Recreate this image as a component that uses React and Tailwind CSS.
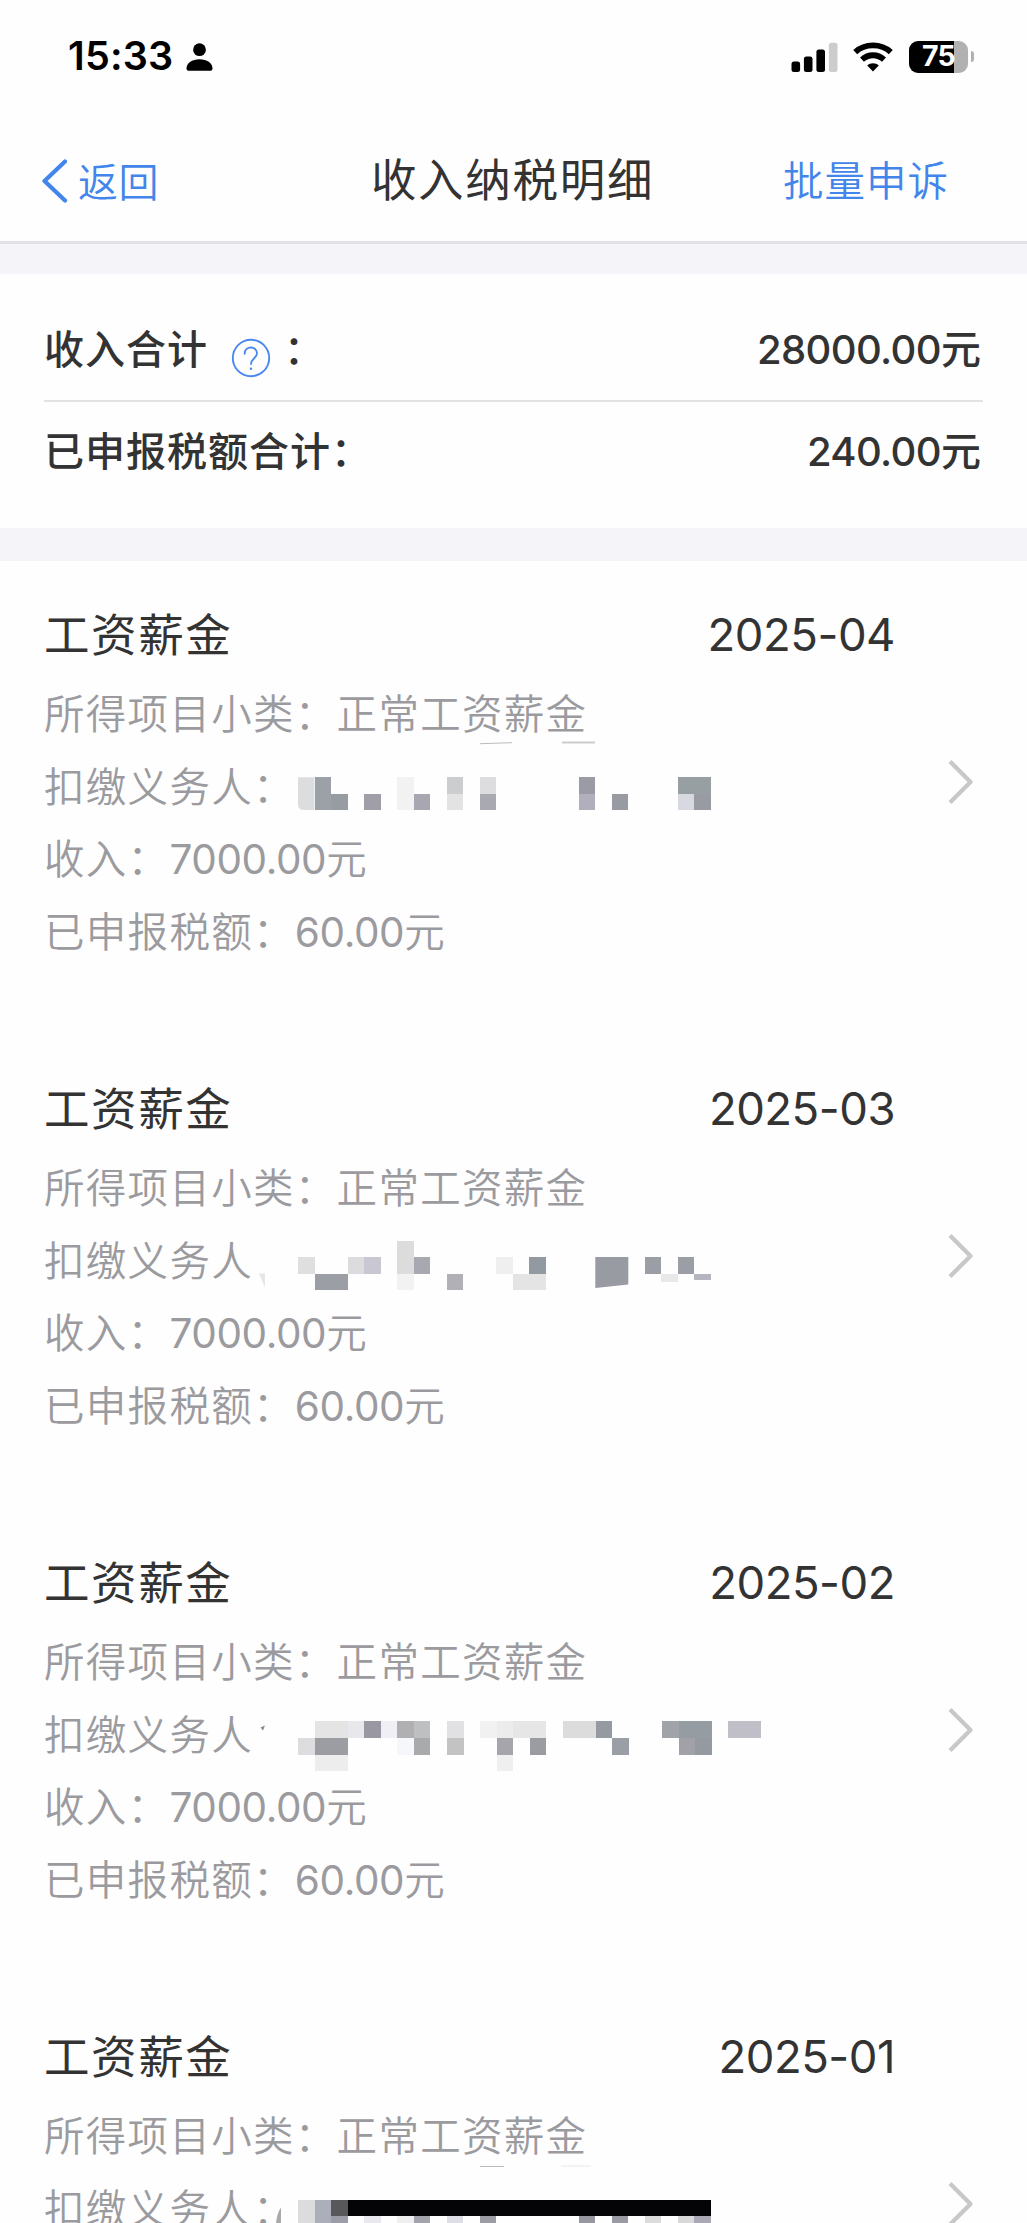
// Masked payer names: [column, y, columns wide, height, colour]
const MASKS = {
  "2025-04": {
    cell: 16.5, x: 298,
    cells: [
      [1, 27.2, 1, 33, "#9ca1a8"], [2, 43.7, 1, 16.3, "#979ca2"], [4, 43.7, 1, 16.3, "#a09fa8"],
      [6, 27.2, 1, 33, "#f2f2f2"], [7, 43.7, 1, 16.3, "#a8a7b1"], [9, 27.2, 1, 16.5, "#cccdce"],
      [9, 43.7, 1, 16.3, "#e3e3e3"], [11, 27.2, 1, 16.5, "#dddddf"], [11, 43.7, 1, 16.3, "#a9a9b1"],
      [17, 27.2, 1, 16.5, "#9b9ba5"], [17, 43.7, 1, 16.3, "#b0afbb"], [19, 43.7, 1, 16.3, "#989ca2"],
      [23, 27.2, 2, 16.5, "#989fa3"], [23, 43.7, 1, 16.3, "#d8d8e1"], [24, 43.7, 1, 16.3, "#989ca2"],
    ],
    extra: (
      <>
        <path d="M298 27.200H314.500V60H304Q298 60 298 54z" fill="#dcdddf" />
        <path d="M480 -6.300l32-1" stroke="#bbbbbb" strokeWidth="1" />
        <path d="M562 -7.500h33" stroke="#cccccc" strokeWidth="2" />
      </>
    ),
  },
  "2025-03": {
    cell: 16.5, x: 298,
    cells: [
      [0, 33, 1, 16.5, "#dfdfdf"], [1, 49.5, 2, 16.5, "#9b9ea4"], [3, 33, 1, 16.5, "#dcdcde"],
      [4, 33, 1, 16.5, "#c8c7d2"], [6, 16.5, 1, 33, "#dcdcdd"], [6, 49.5, 1, 16.5, "#f2f2f2"],
      [7, 33, 1, 16.5, "#a8a8b1"], [9, 49.5, 1, 16.5, "#b0b0b6"], [12, 33, 1, 16.5, "#efefef"],
      [13, 49.5, 2, 16.5, "#e4e4e5"], [14, 33, 1, 16.5, "#9299a0"], [21, 33, 1, 16.5, "#9b9ea4"],
      [22, 49.5, 1, 8, "#e8e8e8"], [23, 33, 1, 16.5, "#9b9ea4"], [24, 49.5, 1, 6.5, "#b5b5bf"],
    ],
    extra: (
      <>
        <path d="M595.300 33h33v27.500l-33 3.500z" fill="#989ba2" />
        <path d="M259 49.500h6v14z" fill="#e6e6e6" />
      </>
    ),
  },
  "2025-02": {
    cell: 16.55, x: 298,
    cells: [
      [0, 40, 1, 17, "#dddddf"], [1, 23, 2, 17, "#e4e4e4"], [1, 40, 2, 17, "#9b9da3"],
      [1, 57, 2, 16, "#ededed"], [3, 23, 1, 17, "#e8e8ec"], [4, 23, 1, 17, "#9998a2"],
      [5, 23, 1, 17, "#efeff5"], [6, 23, 1, 17, "#b0b0b2"], [6, 40, 1, 17, "#f5f7fb"],
      [7, 23, 1, 17, "#bebfc1"], [7, 40, 1, 17, "#a8aaac"], [9, 23, 1, 17, "#e1e1e4"],
      [9, 40, 1, 17, "#c3c3c4"], [11, 23, 1, 17, "#f1f1f1"], [12, 23, 1, 17, "#ececec"],
      [12, 40, 1, 17, "#a5a5ab"], [12, 57, 1, 16, "#efefef"], [13, 23, 2, 17, "#e6e6e7"],
      [14, 40, 1, 17, "#9a9ca2"], [16, 23, 2, 17, "#dcdcdd"], [18, 23, 1, 17, "#9599a0"],
      [19, 40, 1, 17, "#9a9fa5"], [22, 23, 1, 17, "#a0a3a7"], [23, 23, 2, 17, "#959ca2"],
      [23, 40, 1, 17, "#a2a1a8"], [24, 40, 1, 17, "#959aa0"], [26, 23, 2, 17, "#c0bfc8"],
    ],
    extra: <path d="M260.500 29.500l4.500-2-2 5z" fill="#888888" />,
  },
  "2025-01": {
    cell: 16.5, x: 298,
    cells: [
      [0, 28, 1, 24, "#dcdcde"], [1, 28, 1, 24, "#acaeb9"], [2, 28, 1, 16, "#58585a"],
      [2, 44, 1, 8, "#9c9da6"], [3, 28, 22, 16, "#040407"], [4, 44, 1, 8, "#e8e8ee"],
      [6, 44, 1, 8, "#efefef"], [7, 44, 1, 8, "#a3a3ab"], [9, 44, 1, 8, "#dedee6"],
      [11, 44, 1, 8, "#9c9ca4"], [17, 44, 1, 8, "#97979f"], [19, 44, 1, 8, "#9a9aa2"],
      [21, 44, 1, 8, "#dcdcdc"], [23, 44, 1, 8, "#d8d8d8"], [24, 44, 1, 8, "#a9a8b4"],
    ],
    extra: (
      <>
        <path d="M276 51q1-10 5-15.500v15.500z" fill="#aaaaaa" />
        <path d="M480 -5.500h24" stroke="#bbbbbb" strokeWidth="1" />
        <path d="M561 -6h30" stroke="#f3f3f3" strokeWidth="2" />
      </>
    ),
  },
};

const RECORDS = [
  { month: "2025-04", payerLabel: "扣缴义务人：", income: "7000.00", tax: "60.00" },
  { month: "2025-03", payerLabel: "扣缴义务人", income: "7000.00", tax: "60.00" },
  { month: "2025-02", payerLabel: "扣缴义务人", income: "7000.00", tax: "60.00" },
  { month: "2025-01", payerLabel: "扣缴义务人：" },
];

function Mask({ month }) {
  const m = MASKS[month];
  return (
    <svg className="absolute left-0 -top-[2px] overflow-visible" width="760" height="73" viewBox="0 0 760 73">
      <g shapeRendering="crispEdges">
        {m.cells.map(([c, y, w, h, fill], i) => (
          <rect key={i} x={m.x + c * m.cell} y={y} width={w * m.cell} height={h} fill={fill} />
        ))}
      </g>
      {m.extra}
    </svg>
  );
}

function StatusBar() {
  return (
    <div className="flex h-[113px] shrink-0 items-center justify-between pl-[68px] pr-[53px]">
      <div className="flex items-center gap-[13px]">
        <span className="mt-[1px] text-[39.500px] font-semibold tracking-[0.2px] leading-none text-black">15:33</span>
        <svg width="27" height="28" viewBox="0 0 27 28" fill="#000">
          <circle cx="13.500" cy="6.700" r="6.400" />
          <path d="M0.500 25.500C0.500 20 6 16.200 13.500 16.200S26.500 20 26.500 25.500Q26.500 27.800 24.500 27.800H2.500Q0.500 27.800 0.500 25.500z" />
        </svg>
      </div>
      <div className="flex items-center">
        <svg width="47" height="30" viewBox="0 0 47 30">
          <rect x="0.500" y="19.500" width="8.600" height="10.500" rx="2.500" />
          <rect x="12.900" y="14.500" width="8.600" height="15.500" rx="2.500" />
          <rect x="25.400" y="7.500" width="8.600" height="22.500" rx="2.500" />
          <rect x="37.900" y="0.800" width="8.600" height="29.200" rx="2.500" fill="#cccccc" />
        </svg>
        <svg className="ml-[15px]" width="40" height="30" viewBox="0 0 40 30" fill="none" stroke="#000" strokeWidth="5.800">
          <path d="M2.200 10.200C12 1.200 28 1.200 37.800 10.200" />
          <path d="M9 17.600C15.200 11.800 24.800 11.800 31 17.600" />
          <path d="M14.200 23.500C17.300 20.400 22.700 20.400 25.800 23.500L20 29.500z" fill="#000" stroke="none" />
        </svg>
        <div className="ml-4 flex h-8 w-[59px] items-center justify-center overflow-hidden rounded-[9px] bg-[linear-gradient(to_right,#000_45px,#b1b1b1_45px)]">
          <span className="text-[28.500px] font-bold leading-none tracking-[-0.8px] text-white">75</span>
        </div>
        <span className="ml-[3px] h-[11px] w-[3px] rounded-r-full bg-[#b1b1b1]" />
      </div>
    </div>
  );
}

function NavBar() {
  return (
    <div className="flex h-[131px] shrink-0 items-center justify-between border-b-[3px] border-[#e3e2e9] pl-[42px] pr-[78px] pt-[8px]">
      <div className="flex w-[200px] items-center gap-[10px] text-[#4285eb]">
        <svg width="26" height="44" viewBox="0 0 26 44" fill="none" stroke="currentColor" strokeWidth="4.200" strokeLinecap="round" strokeLinejoin="round">
          <path d="M23 2.500L2.500 22L23 41.500" />
        </svg>
        <span className="mt-[3px] text-[40px] font-[350] leading-none tracking-[0.5px]">返回</span>
      </div>
      <h1 className="text-[45.500px] font-normal leading-none tracking-[1.700px] text-[#333]">收入纳税明细</h1>
      <span className="mt-[3px] w-[166px] whitespace-nowrap text-[40.500px] font-[350] leading-none tracking-[1px] text-[#4285eb]">批量申诉</span>
    </div>
  );
}

function Summary() {
  return (
    <section className="flex h-[254px] shrink-0 flex-col px-[44px] pt-[23px] text-[40px] font-medium text-[#333]">
      <div className="flex h-[105px] items-center justify-between border-b-2 border-[#e2e2e2] pr-[2px] pt-[2px]">
        <div className="flex items-center tracking-[1px]">
          <span>收入合计</span>
          <svg className="ml-[23px] mt-[16px]" width="40" height="40" viewBox="0 0 40 40" fill="none" stroke="#4a89f0" strokeWidth="1.900" strokeLinecap="round">
            <circle cx="20" cy="20" r="18.200" />
            <path d="M13.700 15.700C13.700 7.500 26 7.500 26 15.300C26 20 20 20.500 20 26" />
            <circle cx="20" cy="30.700" r="1.200" fill="#4a89f0" stroke="none" />
          </svg>
          <span className="ml-[13px]">：</span>
        </div>
        <span><span className="tracking-[-0.600px]">28000.00</span>元</span>
      </div>
      <div className="flex h-[100px] items-center justify-between pr-[2px]">
        <span className="tracking-[1px]">已申报税额合计：</span>
        <span><span className="tracking-[-0.600px]">240.00</span>元</span>
      </div>
    </section>
  );
}

function Record({ month, payerLabel, income, tax }) {
  return (
    <article className="relative h-[474px] shrink-0 pt-[41px] text-[40.500px] font-[350] tracking-[1.300px] text-[#9b9b9f]">
      <div className="flex h-[66px] items-center justify-between pl-[44px] pr-[132px] text-[45.500px] font-normal text-[#333]">
        <h2 className="mt-[3px] tracking-[1.600px]">工资薪金</h2>
        <span className="mt-[1px] tracking-[-0.5px]">{month}</span>
      </div>
      <div className="flex flex-col pt-[11px] leading-[72.700px]">
        <p className="pl-[44px]">所得项目小类：正常工资薪金</p>
        <div className="relative pl-[44px]">
          {payerLabel}
          <Mask month={month} />
        </div>
        {income && (
          <p className="pl-[44px]">收入：<span className="font-normal tracking-[-0.400px]">{income}</span>元</p>
        )}
        {tax && (
          <p className="pl-[44px]">已申报税额：<span className="font-normal tracking-[-0.400px]">{tax}</span>元</p>
        )}
      </div>
      <svg className="absolute right-[52px] top-[198px]" width="28" height="46" viewBox="0 0 28 46" fill="none" stroke="#c8c8c8" strokeWidth="4.200" strokeLinecap="butt" strokeLinejoin="round">
        <path d="M3 2.500L23.500 23L3 43.500" />
      </svg>
    </article>
  );
}

export default function App() {
  return (
    <main className="flex h-[2223px] w-[1027px] flex-col overflow-hidden bg-[#fefefe] font-['Inter','Noto_Sans_CJK_SC',sans-serif]">
      <StatusBar />
      <NavBar />
      <div className="h-[30px] shrink-0 bg-[#f4f4f9]" />
      <Summary />
      <div className="h-[33px] shrink-0 bg-[#f4f4f9]" />
      {RECORDS.map((r) => (
        <Record key={r.month} {...r} />
      ))}
    </main>
  );
}
